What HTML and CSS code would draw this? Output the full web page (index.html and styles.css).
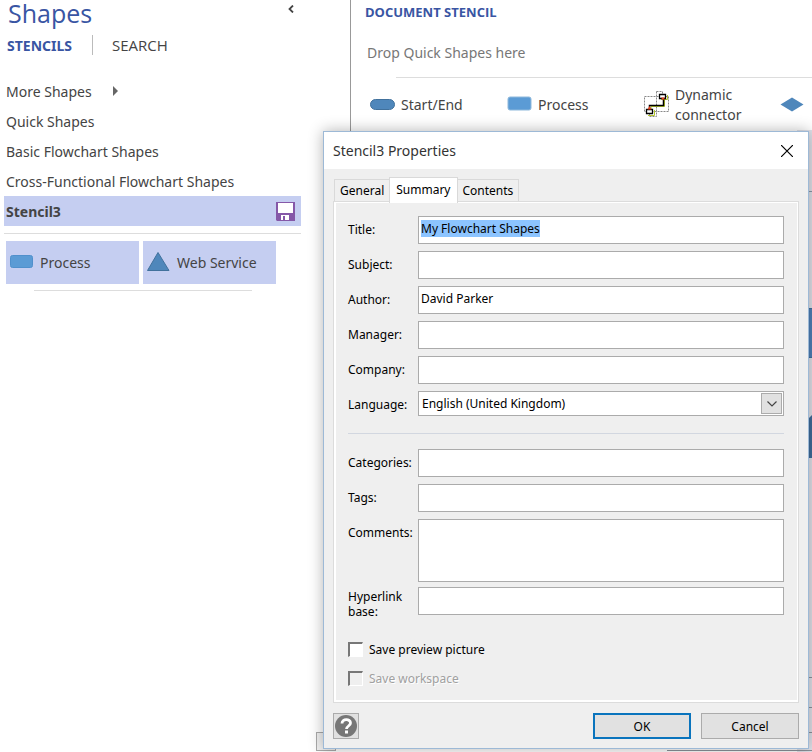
FILE: index.html
```
<!DOCTYPE html>
<html lang="en">

<head>
    <meta charset="UTF-8">
    <meta name="viewport" content="width=device-width, initial-scale=1.0">
    <title>Stencil3 Properties</title>
    <link rel="stylesheet" href="styles.css">
</head>

<body>
    <div class="app">
        <aside class="shapes-panel">
            <header class="panel-header">
                <h1>Shapes</h1>
                <button class="collapse" aria-label="Collapse">
                    <svg width="6" height="8" viewBox="0 0 6 8"><path d="M5 0.5L1.5 4L5 7.5" fill="none" stroke="#444" stroke-width="1.8"/></svg>
                </button>
            </header>
            <nav class="panel-tabs">
                <a href="#stencils" class="current">STENCILS</a>
                <a href="#search">SEARCH</a>
            </nav>
            <ul class="stencil-list">
                <li><a href="#more">More Shapes
                    <svg width="5" height="10" viewBox="0 0 5 10"><path d="M0 0L5 5L0 10Z" fill="#666"/></svg></a></li>
                <li><a href="#quick">Quick Shapes</a></li>
                <li><a href="#basic">Basic Flowchart Shapes</a></li>
                <li><a href="#cross">Cross-Functional Flowchart Shapes</a></li>
                <li class="selected"><a href="#stencil3">Stencil3
                    <svg width="19" height="19" viewBox="0 0 19 19">
                        <path d="M0 0H19V19H1L0 18Z" fill="#8558a8"/>
                        <path d="M2 1H17V11H2Z M5 13H13V18H5Z" fill="#fff"/>
                        <path d="M7 14H9V18H7Z" fill="#8558a8"/>
                    </svg></a></li>
            </ul>
            <div class="masters">
                <button class="master">
                    <svg width="23" height="20" viewBox="0 0 23 20"><rect x="0.5" y="2.5" width="22" height="12" rx="2" fill="#5b9bd5" stroke="#5090cc"/></svg>
                    Process
                </button>
                <button class="master">
                    <svg width="23" height="22" viewBox="0 0 23 22"><path d="M11 0.5L22 18.5H0.5Z" fill="#4f87bb" stroke="#41719c"/></svg>
                    Web Service
                </button>
            </div>
            <div class="rule"></div>
        </aside>

        <section class="document-stencil">
            <h2>DOCUMENT STENCIL</h2>
            <p class="hint">Drop Quick Shapes here</p>
            <div class="quick-shapes">
                <div class="shape">
                    <svg width="25" height="13" viewBox="0 0 25 13"><rect x="0.5" y="0.5" width="24" height="10" rx="5" fill="#4f87bb" stroke="#41719c"/></svg>
                    Start/End
                </div>
                <div class="shape">
                    <svg width="25" height="18" viewBox="0 0 25 18"><rect x="1" y="1" width="23" height="13" rx="2" fill="#5b9bd5" stroke="#8fb9dc"/></svg>
                    Process
                </div>
                <div class="shape">
                    <svg width="25" height="28" viewBox="0 0 25 28">
                        <path d="M0.5 5.5H24.5V20.5H0.5Z M12.5 0.5H18.5V5.5 M12.5 0.5V25.5H5.5V20.5" fill="none" stroke="#888" stroke-dasharray="2 1"/>
                        <path d="M7 18V15.500H20.500V8M4 24.500H10.500V19M17 8.500H23.500V4" fill="none" stroke="#b4c62c"/>
                        <path d="M5.500 18V14.500H19.500V7" fill="none" stroke="#000" stroke-width="1.500"/>
                        <path d="M15.500 3.500H21.500V7.500H15.500ZM2.500 18.500H8.500V22.500H2.500Z" fill="#fff" stroke="#000" stroke-width="1.300"/>
                        <path d="M17 6.500H21L19 9.500ZM5.500 15L7.500 18.500H3.500Z" fill="#e8431f"/>
                    </svg>
                    Dynamic connector
                </div>
                <div class="shape">
                    <svg width="24" height="17" viewBox="0 0 24 17"><path d="M12 0.5L23.500 7.500L12 14.500L0.500 7.500Z" fill="#4f87bb"/></svg>
                </div>
            </div>
        </section>
    </div>

    <div class="canvas">
        <svg width="145" height="622" viewBox="0 0 145 622" aria-hidden="true">
            <rect x="130" width="15" height="622" fill="#e0e2ea"/>
            <path d="M130 61.500H145" stroke="#8b98a8"/>
            <rect x="130" y="178.500" width="20" height="49" fill="#4f81b8" stroke="#41719c"/>
            <path d="M130 300L145 285V328H130Z" fill="#3f6d9b"/>
            <path d="M130 547.500H145M130 577.500H145M130 602.500H145M0 620.500H145" stroke="#8d939b"/>
        </svg>
    </div>
    <div class="scroll-corner"></div>

    <form class="dialog" role="dialog" aria-labelledby="dialog-title">
        <header class="title-bar">
            <span id="dialog-title">Stencil3 Properties</span>
            <button type="button" class="close" aria-label="Close">
                <svg width="12" height="12" viewBox="0 0 12 12"><path d="M0 0L12 12M12 0L0 12" stroke="#000" stroke-width="1.200"/></svg>
            </button>
        </header>
        <div class="dialog-body">
            <div class="tabs" role="tablist">
                <button type="button" role="tab" class="tab">General</button>
                <button type="button" role="tab" class="tab active" aria-selected="true">Summary</button>
                <button type="button" role="tab" class="tab">Contents</button>
            </div>
            <div class="tab-page">
                <div class="field">
                    <label for="title">Title:</label>
                    <input type="text" id="title" value="My Flowchart Shapes" autofocus>
                </div>
                <div class="field">
                    <label for="subject">Subject:</label>
                    <input type="text" id="subject">
                </div>
                <div class="field">
                    <label for="author">Author:</label>
                    <input type="text" id="author" value="David Parker">
                </div>
                <div class="field">
                    <label for="manager">Manager:</label>
                    <input type="text" id="manager">
                </div>
                <div class="field">
                    <label for="company">Company:</label>
                    <input type="text" id="company">
                </div>
                <div class="field">
                    <label for="language">Language:</label>
                    <div class="select-wrap">
                        <select id="language">
                            <option>English (United Kingdom)</option>
                        </select>
                        <span class="arrow"><svg width="10" height="6" viewBox="0 0 10 6"><path d="M0.500 0.500L5 5L9.500 0.500" fill="none" stroke="#444" stroke-width="1.200"/></svg></span>
                    </div>
                </div>
                <hr>
                <div class="field">
                    <label for="categories">Categories:</label>
                    <input type="text" id="categories">
                </div>
                <div class="field">
                    <label for="tags">Tags:</label>
                    <input type="text" id="tags">
                </div>
                <div class="field comments">
                    <label for="comments">Comments:</label>
                    <textarea id="comments"></textarea>
                </div>
                <div class="field hyperlink">
                    <label for="hyperlink">Hyperlink base:</label>
                    <input type="text" id="hyperlink">
                </div>
                <div class="checks">
                    <label><input type="checkbox">Save preview picture</label>
                    <label class="disabled"><input type="checkbox" disabled>Save workspace</label>
                </div>
            </div>
            <footer class="buttons">
                <button type="button" class="help" aria-label="Help">
                    <svg width="22" height="22" viewBox="0 0 22 22"><circle cx="11" cy="11" r="11" fill="#777"/><path d="M7 8.500C7 3.500 15.500 3.500 15.500 8C15.500 11 11.500 11 11.500 14" fill="none" stroke="#fff" stroke-width="2.800"/><rect x="10" y="15.500" width="3" height="3" fill="#fff"/></svg>
                </button>
                <button type="button" class="btn ok">OK</button>
                <button type="button" class="btn">Cancel</button>
            </footer>
        </div>
    </form>

    <script>
        document.getElementById('title').select();
    </script>
</body>

</html>
```
FILE: styles.css
```
* {
    margin: 0;
    padding: 0;
    box-sizing: border-box;
}

body {
    position: relative;
    min-height: 100vh;
    overflow: hidden;
    background-color: #fff;
    color: #444;
    font-family: "Noto Sans", "Open Sans", sans-serif;
    font-size: 14px;
}

a {
    color: inherit;
    text-decoration: none;
}

button,
input,
select,
textarea {
    font: inherit;
    color: inherit;
}

svg {
    display: block;
    flex: none;
}

.app {
    display: grid;
    grid-template-columns: 350px 1fr;
    align-items: start;
}

/* left panel */
.shapes-panel {
    padding-right: 49px;
}

.panel-header {
    display: flex;
    justify-content: space-between;
    align-items: flex-start;
    height: 30px;
    padding: 0 7px 0 8px;
}

h1 {
    font-family: "Open Sans", sans-serif;
    font-size: 25px;
    font-weight: 400;
    line-height: 26px;
    color: #3955a3;
}

.collapse {
    padding-top: 5px;
    border: none;
    background: none;
}

.panel-tabs {
    display: flex;
    align-items: center;
    height: 30px;
    padding-left: 7px;
    font-family: "Open Sans", sans-serif;
    font-size: 15px;
}

.panel-tabs a + a {
    margin-left: 20px;
    padding-left: 19px;
    border-left: 1px solid #bbb;
}

.panel-tabs .current {
    font-family: "Noto Sans", sans-serif;
    font-size: 14px;
    font-weight: 700;
    color: #3955a3;
}

.stencil-list {
    margin: 16px 0 0 4px;
    padding-bottom: 7px;
    border-bottom: 1px solid #ddd;
    list-style: none;
}

.stencil-list a {
    display: flex;
    align-items: center;
    height: 30px;
    padding-left: 2px;
}

.stencil-list svg {
    margin-left: 21px;
}

.selected {
    background-color: #c5cef1;
    font-weight: 700;
}

.selected svg {
    margin-left: auto;
    margin-right: 6px;
}

.masters {
    display: flex;
    gap: 4px;
    margin-left: 6px;
    padding-top: 7px;
}

.master {
    display: flex;
    align-items: center;
    gap: 7px;
    width: 133px;
    height: 43px;
    padding-left: 4px;
    border: none;
    background-color: #c5cef1;
}

.rule {
    margin: 6px 49px 0 34px;
    border-top: 1px solid #ddd;
}

/* document stencil */
.document-stencil {
    padding: 3px 0 0 14px;
    border-left: 1px solid #999;
}

h2 {
    font-family: "Open Sans", sans-serif;
    font-size: 13px;
    line-height: 18px;
    color: #3955a3;
}

.hint {
    margin: 21px 0 14px 2px;
    line-height: 21px;
    color: #777;
}

.quick-shapes {
    display: grid;
    grid-template-columns: 137px 137px 136px 1fr;
    margin-left: 5px;
}

.quick-shapes::before {
    content: "";
    grid-column: 1 / -1;
    margin-left: 26px;
    border-top: 1px solid #ddd;
}

.shape {
    display: flex;
    align-items: center;
    gap: 6px;
    height: 54px;
    padding-right: 24px;
    line-height: 20px;
}

/* drawing page behind the dialog */
.canvas {
    position: absolute;
    top: 130px;
    right: 0;
}

.scroll-corner {
    position: absolute;
    top: 732px;
    left: 316px;
    width: 20px;
    height: 19px;
    border: 1px solid #aaa;
    background-color: #f0f0f0;
}

/* properties dialog */
.dialog {
    position: absolute;
    top: 131px;
    right: 3px;
    left: 323px;
    border: 1px solid #9db9d6;
    background-color: #efefef;
    box-shadow: 0 0 14px rgba(0, 0, 0, 0.3);
    color: #000;
    font-size: 12px;
}

.title-bar {
    display: flex;
    justify-content: space-between;
    align-items: center;
    height: 37px;
    padding: 0 15px 0 9px;
    background-color: #fff;
    font-size: 14px;
    color: #333;
}

.close {
    border: none;
    background: none;
}

.dialog-body {
    padding: 8px 9px 9px 9px;
}

.tabs {
    display: flex;
    align-items: flex-end;
    height: 24px;
    padding-left: 1px;
}

.tab {
    height: 22px;
    padding: 0 5px;
    border: 1px solid #d9d9d9;
    border-bottom: none;
    background-color: #efefef;
}

.tab.active {
    z-index: 1;
    height: 26px;
    margin: 0 -1px -2px;
    padding: 0 6px 3px;
    background-color: #fff;
}

.tab-page {
    padding: 14px;
    border: 1px solid #dcdcdc;
    box-shadow: inset 0 0 0 1px #fff, inset 1px -1px 0 1px #fff;
}

.field {
    display: grid;
    grid-template-columns: 70px 1fr;
    margin-bottom: 7px;
    line-height: 15px;
}

.field label {
    padding-top: 6px;
}

.field input,
.field textarea,
.field select {
    width: 100%;
    height: 28px;
    padding: 0 2px 3px;
    border: 1px solid #ababab;
    border-radius: 0;
    outline: none;
    background-color: #fff;
}

::selection {
    background-color: #8cc4ff;
    color: #000;
}

.select-wrap {
    position: relative;
}

.field select {
    height: 25px;
    padding: 0 3px;
    appearance: none;
}

.arrow {
    position: absolute;
    top: 2px;
    right: 2px;
    display: flex;
    justify-content: center;
    align-items: center;
    width: 21px;
    height: 21px;
    border: 1px solid #ababab;
    background-color: #e1e1e1;
    pointer-events: none;
}

hr {
    margin: 17px 0 15px;
    border: none;
    border-top: 1px solid #d2d7e0;
}

.comments {
    margin-bottom: 5px;
}

.field textarea {
    display: block;
    height: 63px;
    resize: none;
}

.hyperlink label {
    padding-top: 2px;
}

.checks {
    display: grid;
    gap: 9px;
    margin-top: 20px;
}

.checks label {
    display: flex;
    align-items: center;
    gap: 6px;
    height: 20px;
}

.checks input {
    width: 15px;
    height: 15px;
    border: 1px solid #fff;
    border-top: 2px solid #777;
    border-left: 2px solid #777;
    background-color: #fff;
    appearance: none;
}

.checks .disabled {
    color: #a0a0a0;
    text-shadow: 1px 1px #fff;
}

.checks .disabled input {
    background-color: #efefef;
}

.buttons {
    display: flex;
    gap: 10px;
    margin-top: 10px;
}

.help {
    display: flex;
    justify-content: center;
    align-items: center;
    width: 26px;
    height: 26px;
    margin-right: auto;
    border: 1px solid #ababab;
    background-color: #e1e1e1;
}

.btn {
    width: 98px;
    height: 26px;
    border: 1px solid #ababab;
    background-color: #e1e1e1;
}

.ok {
    border: 2px solid #0a74bd;
}
```
